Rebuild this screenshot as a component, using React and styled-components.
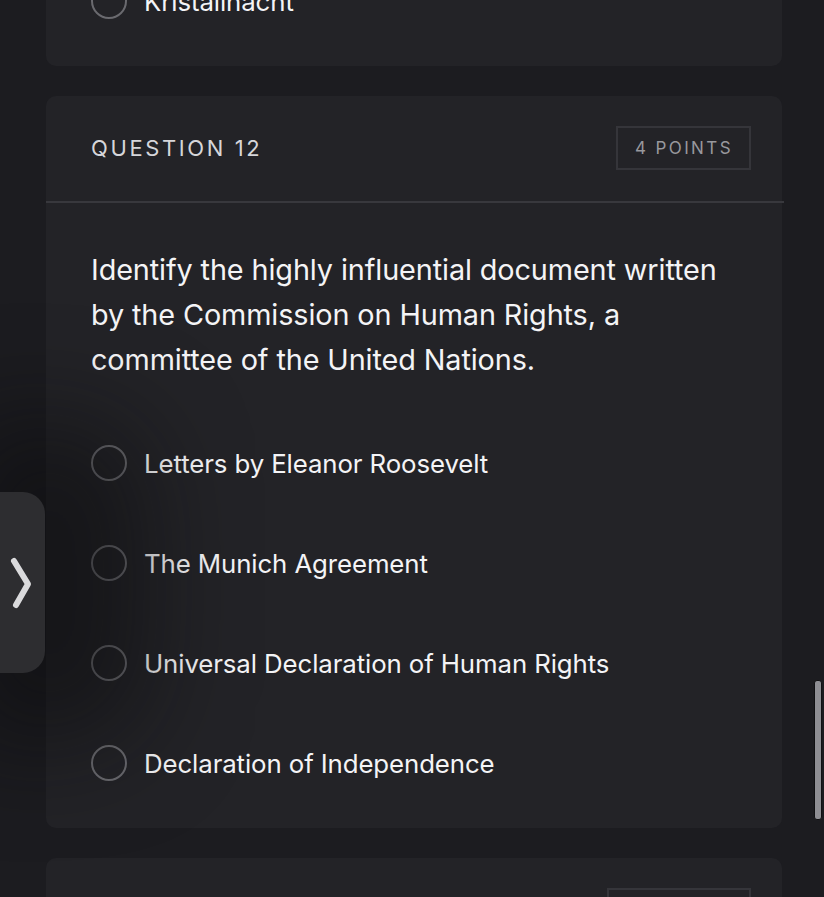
import React from 'react'
import styled, { createGlobalStyle } from 'styled-components'

const GlobalStyle = createGlobalStyle`
  html, body {
    margin: 0;
    padding: 0;
    background: #1c1c20;
    height: 897px;
    overflow: hidden;
  }
  body {
    font-family: Inter, "Noto Sans", "Liberation Sans", sans-serif;
    -webkit-font-smoothing: antialiased;
  }
`

const questions = [
  {
    number: 11,
    points: 4,
    text: '',
    options: ['Kristallnacht'],
    partial: true,
  },
  {
    number: 12,
    points: 4,
    text: 'Identify the highly influential document written by the Commission on Human Rights, a committee of the United Nations.',
    options: [
      'Letters by Eleanor Roosevelt',
      'The Munich Agreement',
      'Universal Declaration of Human Rights',
      'Declaration of Independence',
    ],
  },
  {
    number: 13,
    points: 10,
    text: '',
    options: [],
  },
]

function App() {
  return (
    <>
      <GlobalStyle />
      <Screen>
        <Feed>
          {questions.map(q => (
            <Card key={q.number} partial={q.partial}>
              {!q.partial && (
                <>
                  <CardHeader>
                    <QuestionLabel>QUESTION {q.number}</QuestionLabel>
                    <Points>{q.points} POINTS</Points>
                  </CardHeader>
                  <Divider />
                </>
              )}
              <CardBody partial={q.partial}>
                {q.text && <Prompt>{q.text}</Prompt>}
                <Options partial={q.partial}>
                  {q.options.map(o => (
                    <Option key={o}>
                      <Radio />
                      <OptionText>{o}</OptionText>
                    </Option>
                  ))}
                </Options>
              </CardBody>
            </Card>
          ))}
        </Feed>
        <SideTab>
          <Chevron width="24" height="56" viewBox="0 0 24 56" fill="none">
            <path d="M6 6 L20 29 L8 50" stroke="#dadadc" strokeWidth="6" strokeLinecap="round" strokeLinejoin="round" />
          </Chevron>
        </SideTab>
        <ScrollThumb />
      </Screen>
    </>
  )
}

export default App

const Screen = styled.div`
  position: relative;
  width: 824px;
  height: 897px;
  overflow: hidden;
  background: #1c1c20;
`
const Feed = styled.div`
  display: flex;
  flex-direction: column;
  gap: 30px;
  padding-left: 46px;
  width: 736px;
  margin-top: -120px;
`
const Card = styled.div`
  background: #232327;
  border-radius: 10px;
  height: ${props => props.partial ? '186px' : 'auto'};
  display: flex;
  flex-direction: column;
  justify-content: flex-end;
`
const CardHeader = styled.div`
  display: flex;
  justify-content: space-between;
  align-items: center;
  padding: 30px 31px 31px 45px;
`
const QuestionLabel = styled.div`
  color: #d6d6da;
  font-size: 22px;
  letter-spacing: 2.6px;
  font-weight: 400;
`
const Points = styled.div`
  height: 44px;
  box-sizing: border-box;
  padding: 0 16px 0 17px;
  display: flex;
  align-items: center;
  border: 2px solid #35353a;
  color: #98989d;
  font-size: 17px;
  letter-spacing: 2.4px;
`
const Divider = styled.div`
  height: 2px;
  background: #38383d;
  margin-right: -2px;
`
const CardBody = styled.div`
  padding: ${props => props.partial ? '0 45px 47px' : '44px 45px 47px'};
`
const Prompt = styled.div`
  color: #f4f4f6;
  font-size: 28.8px;
  line-height: 45px;
  letter-spacing: -0.1px;
`
const Options = styled.div`
  display: flex;
  flex-direction: column;
  gap: 64px;
  margin-top: ${props => props.partial ? '0' : '63px'};
  &:empty {
    display: none;
  }
`
const Option = styled.div`
  display: flex;
  align-items: center;
  gap: 17px;
  height: 36px;
`
const Radio = styled.div`
  width: 36px;
  height: 36px;
  box-sizing: border-box;
  border-radius: 50%;
  border: 2px solid #6a6a6f;
  flex-shrink: 0;
`
const OptionText = styled.div`
  color: #f4f4f6;
  font-size: 25.8px;
  letter-spacing: -0.1px;
`
const SideTab = styled.div`
  position: absolute;
  left: 0;
  top: 492px;
  width: 45px;
  height: 181px;
  background: #2d2d30;
  border-radius: 0 22px 22px 0;
  display: flex;
  align-items: center;
  padding-left: 8px;
  box-sizing: border-box;
  box-shadow: 30px 0 100px 70px rgba(10, 10, 12, 0.5);
`
const Chevron = styled.svg`
  flex-shrink: 0;
  display: block;
`
const ScrollThumb = styled.div`
  position: absolute;
  right: 2px;
  top: 680px;
  width: 6px;
  height: 138px;
  border-radius: 3px;
  background: #8e8e93;
  border: 1px solid #111113;
`
